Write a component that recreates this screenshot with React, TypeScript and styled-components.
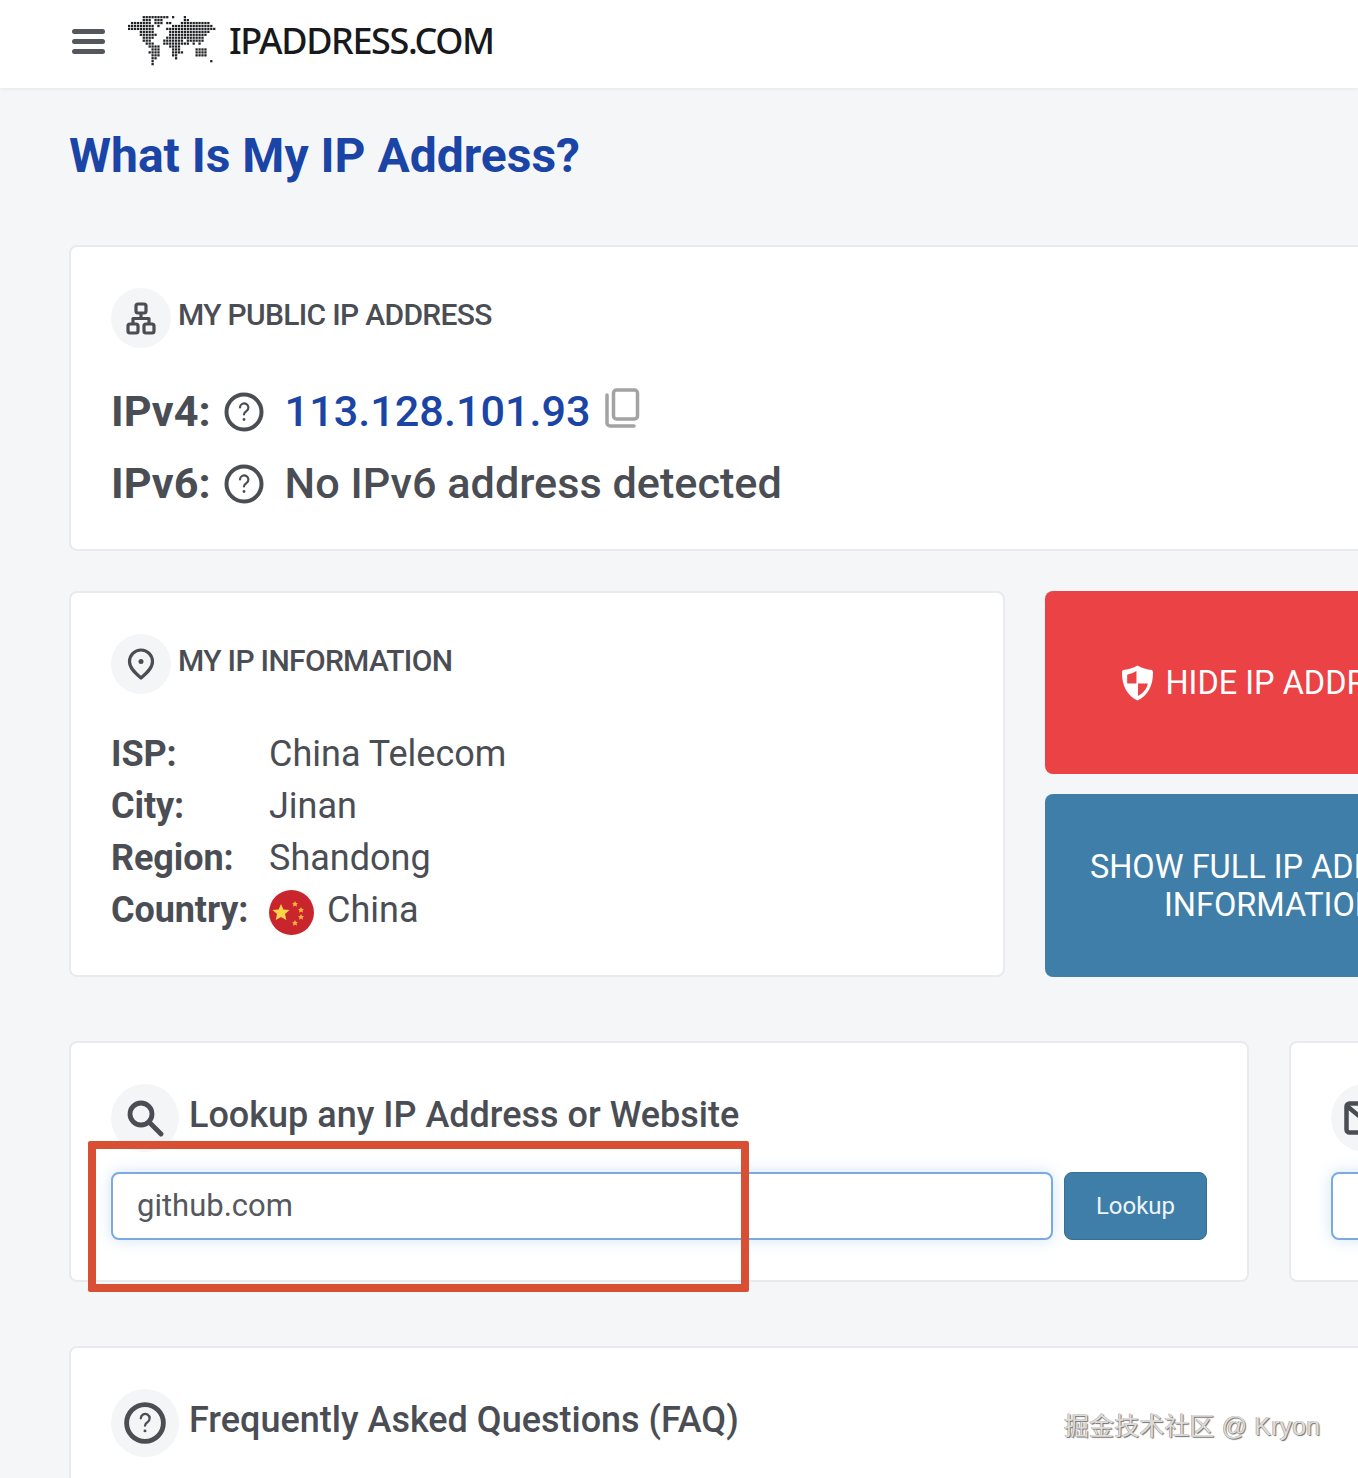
import React from "react";
import styled, { createGlobalStyle } from "styled-components";

const GlobalStyle = createGlobalStyle`
  html, body {
    margin: 0;
    padding: 0;
    background: #f4f6f8;
  }
  body {
    width: 1358px;
    height: 1478px;
    overflow: hidden;
    font-family: Roboto, "Liberation Sans", sans-serif;
    color: #4a4e54;
  }
  * { box-sizing: border-box; }
`;

const Page = styled.div`
  position: relative;
  width: 1358px;
  height: 1478px;
  overflow: hidden;
`;

const Header = styled.header`
  height: 88px;
  background: #fff;
  box-shadow: 0 1px 4px rgba(60, 70, 90, 0.08);
  display: flex;
  align-items: center;
  padding: 0 0 6px 72px;
`;

const Burger = styled.div`
  width: 33px;
  display: flex;
  flex-direction: column;
  gap: 5px;
  margin-right: 23px;

  span {
    height: 5px;
    border-radius: 2.5px;
    background: #54585d;
  }
`;

const LogoText = styled.div`
  font-family: "Noto Sans", sans-serif;
  font-size: 36px;
  font-weight: 500;
  color: #17191c;
  margin: -2px 0 0 11px;
  letter-spacing: -1.4px;
`;

const Main = styled.main`
  width: 1428px;
  margin-left: 69px;
`;

const Title = styled.h1`
  margin: 0;
  padding-top: 38px;
  height: 157px;
  font-size: 48px;
  line-height: 60px;
  font-weight: 700;
  color: #1a44a6;
`;

const Card = styled.section<{ $width?: number }>`
  width: ${(p) => (p.$width ? `${p.$width}px` : "100%")};
  background: #fff;
  border: 2px solid #e8eaed;
  border-radius: 8px;
  padding: 41px 40px 40px;
`;

const CardHead = styled.div<{ $tall?: boolean }>`
  display: flex;
  align-items: center;
  gap: ${(p) => (p.$tall ? 8 : 7)}px;
  height: ${(p) => (p.$tall ? 68 : 60)}px;
`;

const IconDisc = styled.div<{ $size?: number }>`
  width: ${(p) => p.$size ?? 60}px;
  height: ${(p) => p.$size ?? 60}px;
  flex: none;
  border-radius: 50%;
  background: #f3f5f7;
  display: flex;
  align-items: center;
  justify-content: center;
`;

const CardTitle = styled.h2`
  margin: 0 0 8px;
  font-size: 30px;
  font-weight: 500;
  letter-spacing: -0.68px;
`;

const BigTitle = styled.h2`
  margin: 0 0 6px 2px;
  font-size: 36px;
  font-weight: 500;
`;

const PublicCard = styled(Card)`
  height: 306px;
`;

const IpList = styled.div`
  margin-top: 28px;
  display: flex;
  flex-direction: column;
`;

const IpRow = styled.div`
  display: flex;
  align-items: center;
  height: 72px;
  font-size: 43.2px;
  font-weight: 500;

  b {
    font-weight: 700;
    margin-right: 13px;
    margin-bottom: 2px;
  }
`;

const IpValue = styled.span<{ $link?: boolean }>`
  margin: 0 0 2px 21px;
  color: ${(p) => (p.$link ? "#1a44a6" : "#4a4e54")};
`;

const CopyIcon = styled.svg`
  margin-left: 14px;
  margin-top: -8px;
`;

const MiddleRow = styled.div`
  display: flex;
  gap: 40px;
  margin-top: 40px;
`;

const InfoCard = styled(Card)`
  width: 936px;
  height: 386px;
  flex: none;
`;

const InfoTable = styled.div`
  margin-top: 34px;
  display: grid;
  grid-template-columns: 158px 1fr;
  grid-auto-rows: 52px;
  align-items: center;
  font-size: 36px;

  b {
    font-weight: 700;
    letter-spacing: -0.1px;
  }
`;

const CountryValue = styled.div`
  display: flex;
  align-items: center;
  gap: 13px;

  svg {
    margin-top: 5px;
  }
`;

const ActionColumn = styled.div`
  flex: 1;
  display: flex;
  flex-direction: column;
  gap: 20px;
`;

const ActionButton = styled.div<{ $tone: "red" | "blue" }>`
  height: 183px;
  border-radius: 8px;
  background: ${(p) => (p.$tone === "red" ? "#eb4245" : "#3f7ea8")};
  color: #fff;
  font-size: 32.5px;
  line-height: 38px;
  font-weight: 400;
  display: flex;
  align-items: center;
  justify-content: center;
  gap: 12px;
  text-align: center;
  padding-left: ${(p) => (p.$tone === "red" ? 4 : 0)}px;
`;

const LookupRow = styled.div`
  display: flex;
  gap: 40px;
  margin-top: 64px;
`;

const LookupCard = styled(Card)`
  flex: none;
  height: 241px;
`;

const LookupBody = styled.div`
  display: flex;
  gap: 11px;
  margin-top: 20px;
`;

const SearchInput = styled.div`
  flex: 1;
  height: 68px;
  border: 2px solid #7aaae0;
  border-radius: 8px;
  background: #fff;
  box-shadow: 0 0 16px rgba(120, 170, 230, 0.32);
  display: flex;
  align-items: center;
  padding: 0 0 2px 24px;
  font-size: 31px;
  font-weight: 400;
  color: #55595e;
`;

const LookupButton = styled.div`
  width: 143px;
  height: 68px;
  flex: none;
  border-radius: 8px;
  background: #3f7ea8;
  border: 1px solid #36708f;
  color: #eef5fa;
  font-size: 24px;
  display: flex;
  align-items: center;
  justify-content: center;
`;

const FaqCard = styled(Card)`
  margin-top: 64px;
  height: 300px;
`;

const Annotation = styled.div`
  position: absolute;
  left: 88px;
  top: 1141px;
  width: 661px;
  height: 151px;
  border: 8px solid #d94f33;
  border-radius: 2px;
`;

const Watermark = styled.div`
  position: absolute;
  left: 1064px;
  top: 1410px;
  font-family: "Liberation Sans", "Noto Sans CJK SC", sans-serif;
  font-size: 25px;
  line-height: 32px;
  letter-spacing: 0.12px;
  color: #dcdcdc;
  text-shadow: 1px 1px 1px #6e6e6e, -0.5px -0.5px 0 #9a9a9a;
  white-space: nowrap;
`;

// dot map of the logo, one char per cell
const MAP_ROWS = [
  ".....#########.#...#...........",
  ".....###.###.......##..........",
  ".#######.###.##...##########...",
  "#########.#....##############..",
  "#########....#################.",
  "....#####.....##############...",
  "....######....#############....",
  ".....####....#############.....",
  ".....###....#######.######.....",
  "......###...#########.#.#......",
  ".......####...####.............",
  "........###....###.....####....",
  ".......####....####....####....",
  "........###....##......####....",
  "........##......#..............",
  "........#...................#..",
  "........#......................",
];

const WorldLogo = () => (
  <svg width="90" height="50" viewBox="0 0 92 51">
    {MAP_ROWS.map((row, y) =>
      row.split("").map((c, x) =>
        c === "#" ? <rect key={`${x}-${y}`} x={x * 3} y={y * 3} width="2.3" height="2.3" fill="#1f2023" /> : null
      )
    )}
  </svg>
);

const HelpIcon = ({ size = 40, sw = 4 }: { size?: number; sw?: number }) => (
  <svg width={size} height={size} viewBox="0 0 40 40" fill="none" stroke="#4a4e54" strokeWidth={sw}>
    <circle cx="20" cy="20" r="17.5" />
    <path d="M16 15.500a4.200 4.200 0 1 1 6.300 3.700c-1.500.9-2.300 1.600-2.300 3.300" strokeLinecap="round" strokeWidth="2.200" />
    <circle cx="20" cy="27.500" r="1.400" fill="#4a4e54" stroke="none" />
  </svg>
);

const NetworkIcon = () => (
  <svg width="30" height="33" viewBox="0 0 30 33" fill="none" stroke="#4a4e54" strokeWidth="3.200" strokeLinejoin="round">
    <rect x="10" y="2" width="10" height="9" rx="2" />
    <rect x="2" y="22" width="10" height="9" rx="2" />
    <rect x="18" y="22" width="10" height="9" rx="2" />
    <path d="M15 11v5.500M7 22v-5.500h16v5.500" />
  </svg>
);

const PinIcon = () => (
  <svg width="28" height="32" viewBox="0 0 28 32" fill="none" stroke="#4a4e54" strokeWidth="3.200">
    <path d="M14 30C8 25 2.500 20 2.500 13.500a11.500 11.500 0 0 1 23 0C25.500 20 20 25 14 30z" strokeLinejoin="round" />
    <circle cx="14" cy="13.500" r="2.500" fill="#4a4e54" stroke="none" />
  </svg>
);

const SearchIcon = () => (
  <svg width="38" height="38" viewBox="0 0 38 38" fill="none" stroke="#4a4e54" strokeWidth="4.800" strokeLinecap="round">
    <circle cx="15" cy="15" r="11" />
    <path d="M23.500 23.500l11.500 11.500" />
  </svg>
);

const MailIcon = () => (
  <svg width="42" height="34" viewBox="0 0 42 34" fill="none" stroke="#4a4e54" strokeWidth="4.500" strokeLinejoin="round">
    <rect x="2.500" y="2.500" width="37" height="29" rx="3" />
    <path d="M3 5l18 15 18-15" />
  </svg>
);

const ShieldIcon = () => (
  <svg width="31" height="36" viewBox="0 0 30 34">
    <path
      fill="#fff"
      d="M15 0C19 2.500 24 4 29 4.500 29.500 5 30 6 30 7 30 20 25 29 15 34 5 29 0 20 0 7 0 6 .5 5 1 4.500 6 4 11 2.500 15 0z"
    />
    <path fill="#eb4245" d="M14 5.500V17.500H5V9C8 8.500 11 7.300 14 5.500zM15.500 17.500H25C24 23 20.500 27 15.500 29.500z" />
  </svg>
);

const FlagIcon = () => (
  <svg width="45" height="45" viewBox="0 0 45 45">
    <circle cx="22.500" cy="22.500" r="22.500" fill="#c9252d" />
    <polygon fill="#fcd34d" points="12,14 14.400,19.500 20.500,20 16,24 17.300,30 12,27 6.700,30 8,24 3.500,20 9.600,19.500" />
    <polygon fill="#fcb83d" points="26,11 27,13 29,13.200 27.500,14.600 28,16.700 26,15.600 24,16.700 24.500,14.600 23,13.200 25,13" />
    <polygon fill="#fcb83d" points="32,17 33,19 35,19.200 33.500,20.600 34,22.700 32,21.600 30,22.700 30.500,20.600 29,19.200 31,19" />
    <polygon fill="#fcb83d" points="32,24 33,26 35,26.200 33.500,27.600 34,29.700 32,28.600 30,29.700 30.500,27.600 29,26.200 31,26" />
    <polygon fill="#fcb83d" points="26,30 27,32 29,32.200 27.500,33.600 28,35.700 26,34.600 24,35.700 24.500,33.600 23,32.200 25,32" />
  </svg>
);

const App = () => {
  return (
    <Page>
      <GlobalStyle />
      <Header>
        <Burger>
          <span />
          <span />
          <span />
        </Burger>
        <WorldLogo />
        <LogoText>IPADDRESS.COM</LogoText>
      </Header>
      <Main>
        <Title>What Is My IP Address?</Title>
        <PublicCard>
          <CardHead>
            <IconDisc>
              <NetworkIcon />
            </IconDisc>
            <CardTitle>MY PUBLIC IP ADDRESS</CardTitle>
          </CardHead>
          <IpList>
            <IpRow>
              <b>IPv4:</b>
              <HelpIcon />
              <IpValue $link>113.128.101.93</IpValue>
              <CopyIcon width="35" height="40" viewBox="0 0 35 40" fill="none" stroke="#a3a3a3" strokeWidth="3.500">
                <rect x="8.500" y="2" width="24" height="29" rx="3" />
                <path d="M2 7v28a3 3 0 0 0 3 3h24" strokeLinecap="round" />
              </CopyIcon>
            </IpRow>
            <IpRow>
              <b>IPv6:</b>
              <HelpIcon />
              <IpValue>No IPv6 address detected</IpValue>
            </IpRow>
          </IpList>
        </PublicCard>
        <MiddleRow>
          <InfoCard>
            <CardHead>
              <IconDisc>
                <PinIcon />
              </IconDisc>
              <CardTitle>MY IP INFORMATION</CardTitle>
            </CardHead>
            <InfoTable>
              <b>ISP:</b>
              <span>China Telecom</span>
              <b>City:</b>
              <span>Jinan</span>
              <b>Region:</b>
              <span>Shandong</span>
              <b>Country:</b>
              <CountryValue>
                <FlagIcon />
                China
              </CountryValue>
            </InfoTable>
          </InfoCard>
          <ActionColumn>
            <ActionButton $tone="red">
              <ShieldIcon />
              HIDE IP ADDRESS
            </ActionButton>
            <ActionButton $tone="blue">
              SHOW FULL IP ADDRESS
              <br />
              INFORMATION
            </ActionButton>
          </ActionColumn>
        </MiddleRow>
        <LookupRow>
          <LookupCard $width={1180}>
            <CardHead $tall>
              <IconDisc $size={68}>
                <SearchIcon />
              </IconDisc>
              <BigTitle>Lookup any IP Address or Website</BigTitle>
            </CardHead>
            <LookupBody>
              <SearchInput>github.com</SearchInput>
              <LookupButton>Lookup</LookupButton>
            </LookupBody>
          </LookupCard>
          <LookupCard $width={400}>
            <CardHead $tall>
              <IconDisc $size={68}>
                <MailIcon />
              </IconDisc>
            </CardHead>
            <LookupBody>
              <SearchInput />
            </LookupBody>
          </LookupCard>
        </LookupRow>
        <FaqCard>
          <CardHead $tall>
            <IconDisc $size={68}>
              <HelpIcon size={42} sw={4.600} />
            </IconDisc>
            <BigTitle>Frequently Asked Questions (FAQ)</BigTitle>
          </CardHead>
        </FaqCard>
      </Main>
      <Annotation />
      <Watermark>掘金技术社区 @ Kryon</Watermark>
    </Page>
  );
};

export default App;
